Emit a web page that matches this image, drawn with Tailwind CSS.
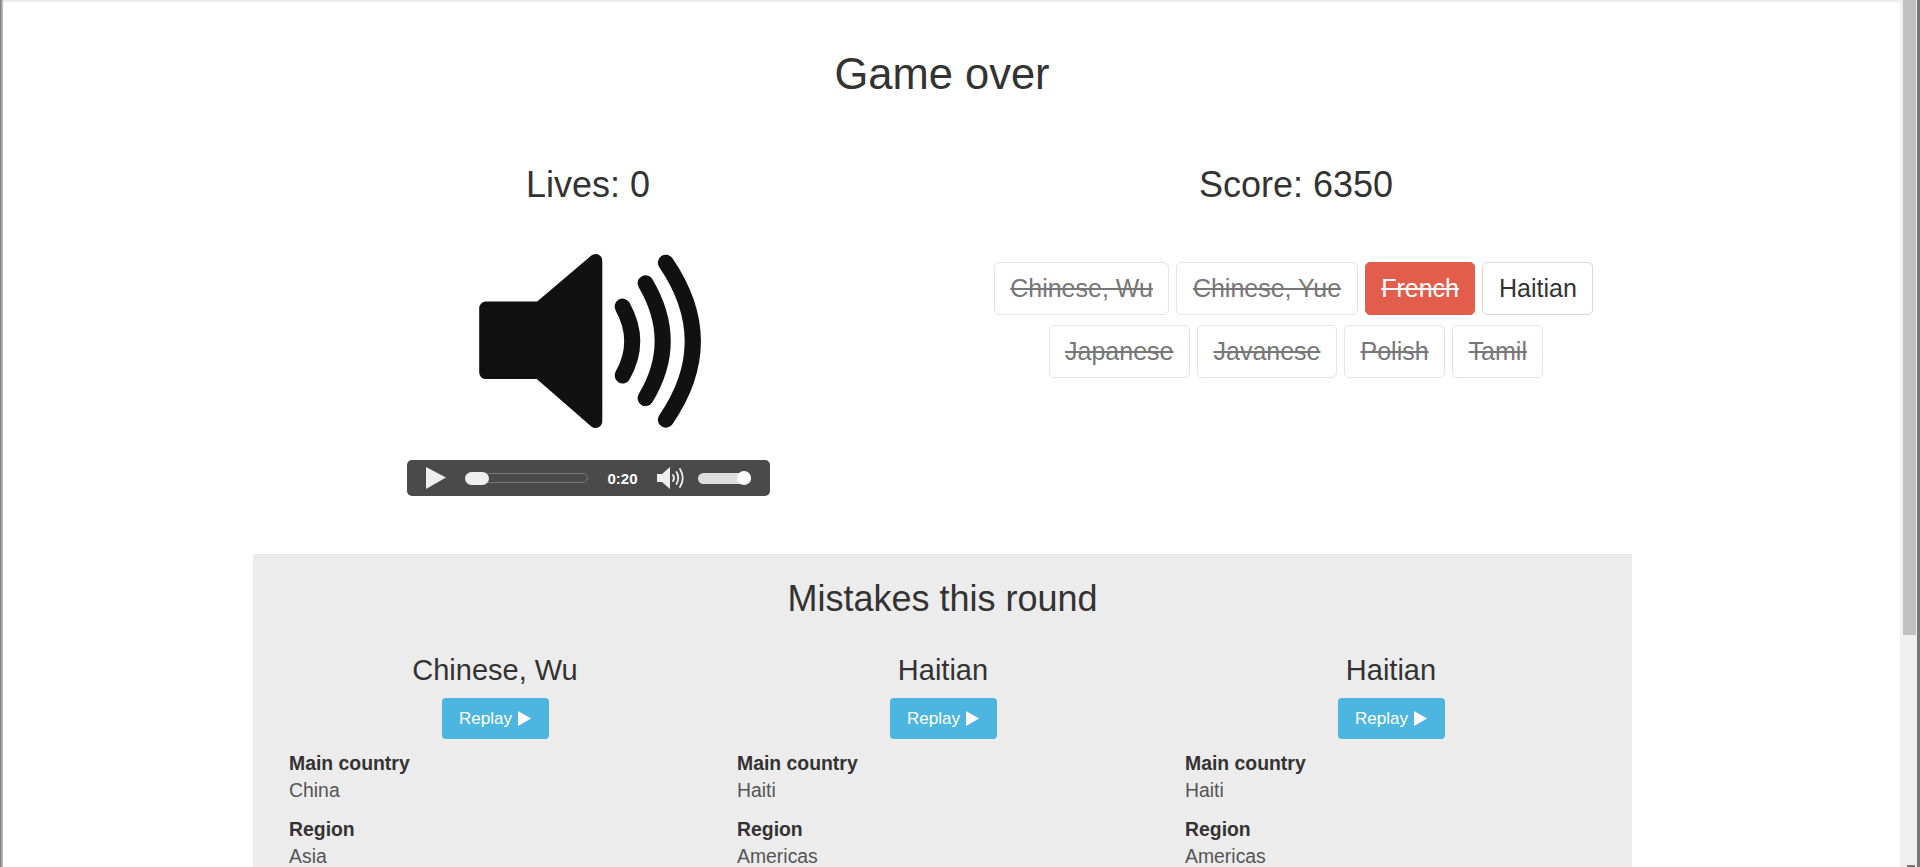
<!doctype html>
<html lang="en">
<head>
<meta charset="utf-8">
<title>Game over</title>
<script src="https://cdn.jsdelivr.net/npm/@tailwindcss/browser@4"></script>
</head>
<body class="relative h-[867px] overflow-hidden bg-white font-['Liberation_Sans',Arial,sans-serif] text-[#333]">
  <div class="absolute inset-x-0 top-0 h-[2px] bg-[#ececec]"></div>
  <div class="absolute inset-y-0 left-0 w-[3px] bg-gradient-to-r from-[#777] to-[#ccc]"></div>
  <div class="absolute inset-y-0 right-0 w-[20px] bg-[#f0f0f0]"></div>
  <div class="absolute right-[4px] top-0 h-[635px] w-[13px] bg-[#c0c0c0]"></div>
  <div class="absolute inset-y-0 right-0 w-[3px] bg-[#777]"></div>
  <div class="absolute bottom-0 right-[5px] h-[2px] w-[8px] bg-[#777]"></div>

  <main class="ml-[234px] w-[1416px]">
    <h1 class="pt-[48px] text-center text-[43.5px] leading-[52px]">Game over</h1>

    <div class="mt-[65px] grid grid-cols-2">
      <section class="flex flex-col items-center">
        <h2 class="text-[36px] leading-[40px]">Lives: 0</h2>
        <svg class="mt-[45px] h-[183px] w-[230px]" viewBox="279 60 690 550" aria-label="Speaker">
          <path fill="#111" stroke="#111" stroke-width="40" stroke-linejoin="round" d="M317 235H478L647 92V575L478 428H317Z"/>
          <g fill="none" stroke="#111" stroke-width="48" stroke-linecap="round">
            <path d="M728 230Q786 335 728 437"/>
            <path d="M797 160Q900 335 797 505"/>
            <path d="M858 98Q1020 335 858 570"/>
          </g>
        </svg>
        <div class="mt-[27px] flex h-[36px] w-[363px] items-center rounded-[5px] bg-[#4a4a4a] pl-[19px]">
          <svg class="h-[22px] w-[20px]" viewBox="0 0 20 22"><path fill="#eee" d="M0 0L20 10.5L0 22Z"/></svg>
          <div class="relative ml-[19px] flex h-[10px] w-[123px] items-center rounded-full border border-[#777]">
            <div class="absolute -left-px h-[13px] w-[24px] rounded-full bg-[#eee]"></div>
          </div>
          <span class="ml-[20px] w-[49px] text-[15px] font-bold leading-none text-white">0:20</span>
          <svg class="h-[24px] w-[27px]" viewBox="0 0 27 24" aria-label="Volume">
            <path fill="#eee" d="M0 8H5L13 1V23L5 16H0Z"/>
            <g fill="none" stroke="#eee" stroke-width="1.8" stroke-linecap="round">
              <path d="M16 9Q18 12 16 15"/><path d="M19.5 6Q23 12 19.5 18"/><path d="M23 3Q28.5 12 23 21"/>
            </g>
          </svg>
          <div class="relative ml-[14px] flex h-[11px] w-[53px] items-center rounded-full bg-[#ddd]">
            <div class="absolute right-0 h-[14px] w-[14px] rounded-full bg-white"></div>
          </div>
        </div>
      </section>

      <section class="flex flex-col items-center">
        <h2 class="text-[36px] leading-[40px]">Score: 6350</h2>
        <div class="mt-[57px] flex flex-col items-center gap-y-[10px] text-[25px]">
          <div class="flex gap-x-[7px] pr-[5px]">
            <span class="flex h-[53px] items-center rounded-[5px] border border-[#e4e4e4] px-[15.5px] text-[#777] line-through">Chinese, Wu</span>
            <span class="flex h-[53px] items-center rounded-[5px] border border-[#e4e4e4] px-[15.5px] text-[#777] line-through">Chinese, Yue</span>
            <span class="flex h-[53px] items-center rounded-[5px] border border-[#e2594a] bg-[#e25d4c] px-[15.5px] text-white line-through">French</span>
            <span class="flex h-[53px] items-center rounded-[5px] border border-[#d8d8d8] px-[15.5px] text-[#333]">Haitian</span>
          </div>
          <div class="flex gap-x-[7px]">
            <span class="flex h-[53px] items-center rounded-[5px] border border-[#e4e4e4] px-[15.5px] text-[#777] line-through">Japanese</span>
            <span class="flex h-[53px] items-center rounded-[5px] border border-[#e4e4e4] px-[15.5px] text-[#777] line-through">Javanese</span>
            <span class="flex h-[53px] items-center rounded-[5px] border border-[#e4e4e4] px-[15.5px] text-[#777] line-through">Polish</span>
            <span class="flex h-[53px] items-center rounded-[5px] border border-[#e4e4e4] px-[15.5px] text-[#777] line-through">Tamil</span>
          </div>
        </div>
      </section>
    </div>

    <section class="ml-[19px] mt-[58px] h-[400px] w-[1379px] bg-[#ececec] px-[18px] pt-[23px]">
      <h2 class="text-center text-[36px] leading-[44px]">Mistakes this round</h2>
      <div class="mt-[32px] grid w-[1344px] grid-cols-3 text-[19.4px] leading-[27px]">
        <article class="px-[18px]">
          <h3 class="text-center text-[29px] leading-[34px]">Chinese, Wu</h3>
          <div class="mt-[11px] flex justify-center">
            <span class="flex h-[41px] w-[107px] items-center justify-center gap-[6px] rounded-[4px] bg-[#4db6e0] text-[17px] text-white">Replay <svg class="h-[15px] w-[13px]" viewBox="0 0 13 15"><path fill="#fff" d="M0 0L13 7.5L0 15Z"/></svg></span>
          </div>
          <p class="mt-[11px] font-bold">Main country</p>
          <p class="text-[#555]">China</p>
          <p class="mt-[12px] font-bold">Region</p>
          <p class="text-[#555]">Asia</p>
        </article>
        <article class="px-[18px]">
          <h3 class="text-center text-[29px] leading-[34px]">Haitian</h3>
          <div class="mt-[11px] flex justify-center">
            <span class="flex h-[41px] w-[107px] items-center justify-center gap-[6px] rounded-[4px] bg-[#4db6e0] text-[17px] text-white">Replay <svg class="h-[15px] w-[13px]" viewBox="0 0 13 15"><path fill="#fff" d="M0 0L13 7.5L0 15Z"/></svg></span>
          </div>
          <p class="mt-[11px] font-bold">Main country</p>
          <p class="text-[#555]">Haiti</p>
          <p class="mt-[12px] font-bold">Region</p>
          <p class="text-[#555]">Americas</p>
        </article>
        <article class="px-[18px]">
          <h3 class="text-center text-[29px] leading-[34px]">Haitian</h3>
          <div class="mt-[11px] flex justify-center">
            <span class="flex h-[41px] w-[107px] items-center justify-center gap-[6px] rounded-[4px] bg-[#4db6e0] text-[17px] text-white">Replay <svg class="h-[15px] w-[13px]" viewBox="0 0 13 15"><path fill="#fff" d="M0 0L13 7.5L0 15Z"/></svg></span>
          </div>
          <p class="mt-[11px] font-bold">Main country</p>
          <p class="text-[#555]">Haiti</p>
          <p class="mt-[12px] font-bold">Region</p>
          <p class="text-[#555]">Americas</p>
        </article>
      </div>
    </section>
  </main>
</body>
</html>
